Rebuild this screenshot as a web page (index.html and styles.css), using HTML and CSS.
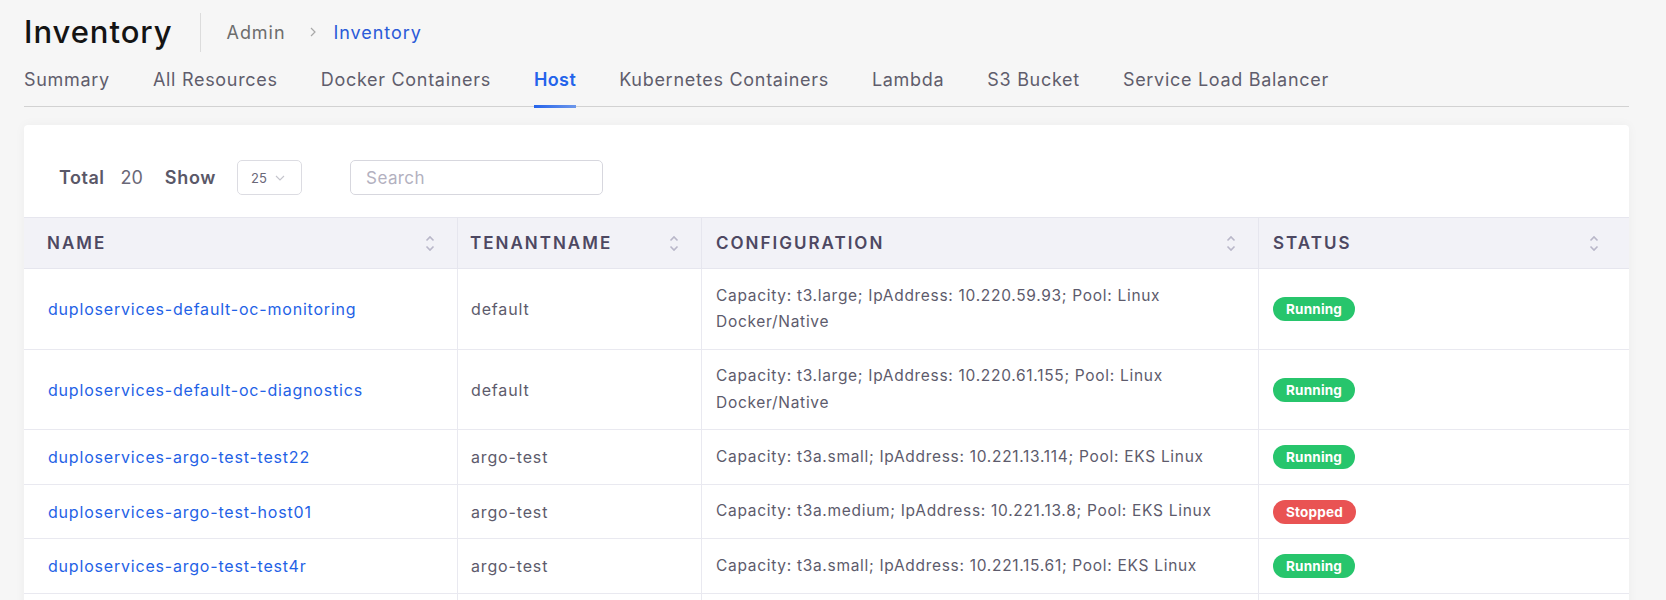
FILE: index.html
```html
<!DOCTYPE html>
<html lang="en">
<head>
<meta charset="utf-8">
<title>Inventory</title>
<link rel="stylesheet" href="styles.css">
</head>
<body>
<div class="page">
  <header class="page-header">
    <h1 class="title">Inventory</h1>
    <div class="sep"></div>
    <nav class="crumbs">
      <span class="crumb">Admin</span>
      <span class="crumb-arrow">
        <svg width="8" height="10" viewBox="0 0 8 10"><path d="M2 1 L6 5 L2 9" fill="none" stroke="#a8a8a8" stroke-width="1.2"/></svg>
      </span>
      <span class="crumb current">Inventory</span>
    </nav>
  </header>

  <nav class="tabs">
    <span class="tab">Summary</span>
    <span class="tab">All Resources</span>
    <span class="tab">Docker Containers</span>
    <span class="tab active">Host</span>
    <span class="tab">Kubernetes Containers</span>
    <span class="tab">Lambda</span>
    <span class="tab">S3 Bucket</span>
    <span class="tab">Service Load Balancer</span>
  </nav>

  <section class="card">
    <div class="toolbar">
      <span class="lbl">Total</span>
      <span class="val">20</span>
      <span class="lbl show">Show</span>
      <div class="select">
        <span>25</span>
        <svg width="10" height="6" viewBox="0 0 10 6"><path d="M1 1 L5 5 L9 1" fill="none" stroke="#c4c4cc" stroke-width="1.1"/></svg>
      </div>
      <div class="search">Search</div>
    </div>

    <div class="grid">
      <div class="th first"><span>NAME</span><svg class="sort" width="10" height="17" viewBox="0 0 10 17"><path d="M1.5 5.5 L5 2 L8.5 5.5 M1.5 11.5 L5 15 L8.5 11.5" fill="none" stroke="#b9b7c9" stroke-width="1.6"/></svg></div>
      <div class="th second"><span>TENANTNAME</span><svg class="sort" width="10" height="17" viewBox="0 0 10 17"><path d="M1.5 5.5 L5 2 L8.5 5.5 M1.5 11.5 L5 15 L8.5 11.5" fill="none" stroke="#b9b7c9" stroke-width="1.6"/></svg></div>
      <div class="th"><span>CONFIGURATION</span><svg class="sort" width="10" height="17" viewBox="0 0 10 17"><path d="M1.5 5.5 L5 2 L8.5 5.5 M1.5 11.5 L5 15 L8.5 11.5" fill="none" stroke="#b9b7c9" stroke-width="1.6"/></svg></div>
      <div class="th last"><span>STATUS</span><svg class="sort" width="10" height="17" viewBox="0 0 10 17"><path d="M1.5 5.5 L5 2 L8.5 5.5 M1.5 11.5 L5 15 L8.5 11.5" fill="none" stroke="#b9b7c9" stroke-width="1.6"/></svg></div>

      <div class="td first"><a class="link">duploservices-default-oc-monitoring</a></div>
      <div class="td tenant">default</div>
      <div class="td config">Capacity: t3.large; IpAddress: 10.220.59.93; Pool: Linux Docker/Native</div>
      <div class="td"><span class="badge ok">Running</span></div>

      <div class="td first"><a class="link">duploservices-default-oc-diagnostics</a></div>
      <div class="td tenant">default</div>
      <div class="td config">Capacity: t3.large; IpAddress: 10.220.61.155; Pool: Linux Docker/Native</div>
      <div class="td"><span class="badge ok">Running</span></div>

      <div class="td first"><a class="link">duploservices-argo-test-test22</a></div>
      <div class="td tenant">argo-test</div>
      <div class="td config">Capacity: t3a.small; IpAddress: 10.221.13.114; Pool: EKS Linux</div>
      <div class="td"><span class="badge ok">Running</span></div>

      <div class="td first"><a class="link">duploservices-argo-test-host01</a></div>
      <div class="td tenant">argo-test</div>
      <div class="td config">Capacity: t3a.medium; IpAddress: 10.221.13.8; Pool: EKS Linux</div>
      <div class="td"><span class="badge bad">Stopped</span></div>

      <div class="td first"><a class="link">duploservices-argo-test-test4r</a></div>
      <div class="td tenant">argo-test</div>
      <div class="td config">Capacity: t3a.small; IpAddress: 10.221.15.61; Pool: EKS Linux</div>
      <div class="td"><span class="badge ok">Running</span></div>

      <div class="td first filler"></div>
      <div class="td filler"></div>
      <div class="td filler"></div>
      <div class="td filler"></div>
    </div>
  </section>
</div>
</body>
</html>
```

FILE: styles.css
```css
* { box-sizing: border-box; }

html, body {
  margin: 0;
  padding: 0;
  background: #f6f6f6;
  font-family: Inter, "Open Sans", "Liberation Sans", sans-serif;
  color: #5c5a6b;
}

.page {
  padding: 12px 37px 0 24px;
}

.page-header {
  display: flex;
  align-items: center;
  height: 40px;
}

.title {
  margin: 0;
  font-size: 31px;
  font-weight: 500;
  color: #141414;
  line-height: 40px;
  letter-spacing: 0.95px;
}

.sep {
  width: 1px;
  height: 39px;
  background: #dcdcdc;
  margin: 0 26px 0 27px;
}

.crumbs {
  display: flex;
  align-items: center;
  font-size: 18px;
  letter-spacing: 0.95px;
}

.crumb { color: #6d6d6d; }
.crumb.current { color: #2b5bd8; }

.crumb-arrow {
  display: flex;
  margin: 0 16px 0 24px;
}

.tabs {
  display: flex;
  gap: 43px;
  margin-top: 16px;
  border-bottom: 1.5px solid #d2d2d2;
}

.tab {
  position: relative;
  font-size: 18px;
  letter-spacing: 0.7px;
  line-height: 24px;
  padding-bottom: 14px;
  color: #5f5d6c;
}

.tab.active {
  color: #2463eb;
  font-weight: 600;
  letter-spacing: 0.4px;
}

.tab.active::after {
  content: "";
  position: absolute;
  left: 0;
  right: 0;
  bottom: -2px;
  height: 3px;
  background: linear-gradient(90deg, #2563eb, #6d97ea);
}

.card {
  margin-top: 18px;
  background: #fff;
  border-radius: 4px;
  box-shadow: 0 0 12px rgba(0,0,0,0.04);
  overflow: hidden;
}

.toolbar {
  display: flex;
  align-items: center;
  padding: 35px 0 22px 35px;
  height: 92px;
}

.lbl {
  font-size: 18px;
  font-weight: 600;
  letter-spacing: 0.5px;
  color: #5a5868;
}

.lbl.show { letter-spacing: 0.7px; }

.val {
  font-size: 18px;
  color: #6a6878;
  margin: 0 22px 0 16px;
}

.select {
  display: flex;
  align-items: center;
  gap: 8px;
  width: 65px;
  height: 35px;
  margin-left: 21px;
  padding-left: 13px;
  border: 1px solid #dcdce2;
  border-radius: 5px;
  font-size: 13px;
  color: #6a6878;
}

.search {
  display: flex;
  align-items: center;
  width: 253px;
  height: 35px;
  margin-left: 48px;
  padding-left: 15px;
  border: 1px solid #d7d7de;
  border-radius: 5px;
  font-size: 17px;
  letter-spacing: 0.4px;
  color: #b3b1c0;
}

.grid {
  display: grid;
  grid-template-columns: 434px 244px 557px 1fr;
  border-top: 1px solid #e6e6ee;
}

.th {
  display: flex;
  align-items: center;
  justify-content: space-between;
  height: 51px;
  padding: 0 22px 0 14px;
  background: #f2f2f7;
  border-right: 1px solid #e6e6ee;
  border-bottom: 1px solid #e6e6ee;
  font-size: 17px;
  font-weight: 600;
  letter-spacing: 2px;
  color: #4d4862;
}

.th.first { padding-left: 23px; }
.th.second { padding-left: 12px; }
.th.last { border-right: 0; padding-right: 30px; }

.sort { display: block; }

.td {
  display: flex;
  align-items: center;
  min-height: 54px;
  padding: 14px 14px 13.5px 14px;
  border-right: 1px solid #e9e9f0;
  border-bottom: 1px solid #e9e9f0;
  font-size: 16px;
  letter-spacing: 0.85px;
  line-height: 26px;
  color: #5d5b6c;
}

.td.tenant { padding-left: 13px; }

.td.config {
  font-size: 15.5px;
  letter-spacing: 0.7px;
  line-height: 26.5px;
  padding-top: 13.5px;
  padding-bottom: 13px;
}

.td:nth-child(4n) { border-right: 0; }
.td.first { padding-left: 24px; }

.link {
  color: #1f62e6;
  font-size: 16px;
  letter-spacing: 0.8px;
  text-decoration: none;
}

.badge {
  display: inline-flex;
  align-items: center;
  height: 24px;
  padding: 0 13px;
  border-radius: 12px;
  color: #fff;
  font-size: 13.5px;
  font-weight: 700;
  letter-spacing: 0.2px;
}

.badge.ok { background: #27c56c; }
.badge.bad { background: #e95353; }
```
